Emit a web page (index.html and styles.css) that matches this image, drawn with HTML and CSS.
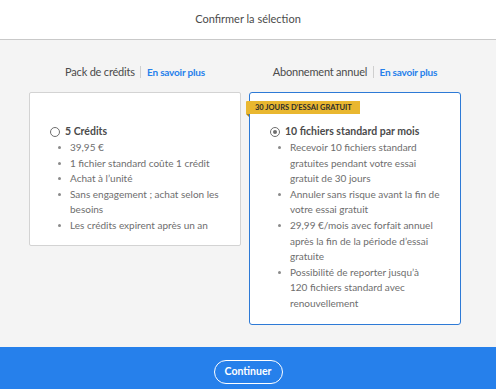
FILE: index.html
```html
<!DOCTYPE html>
<html lang="fr">
<head>
    <meta charset="UTF-8">
    <meta name="viewport" content="width=device-width, initial-scale=1.0">
    <title>Confirmer la sélection</title>
    <link rel="stylesheet" href="styles.css">
</head>
<body>
    <div class="header">Confirmer la sélection</div>
    <div class="content">
        <div class="plans">
            <div class="plan">
                <div class="plan-title">
                    Pack de crédits <span class="sep"></span> <a href="#" class="more">En savoir plus</a>
                </div>
                <div class="card">
                    <div class="option">
                        <span class="radio"></span>
                        <span class="option-name">5 Crédits</span>
                    </div>
                    <ul>
                        <li>39,95 €</li>
                        <li>1 fichier standard coûte 1 crédit</li>
                        <li>Achat à l’unité</li>
                        <li>Sans engagement ; achat selon les besoins</li>
                        <li>Les crédits expirent après un an</li>
                    </ul>
                </div>
            </div>
            <div class="plan">
                <div class="plan-title">
                    Abonnement annuel <span class="sep"></span> <a href="#" class="more">En savoir plus</a>
                </div>
                <div class="card selected">
                    <div class="badge">30 JOURS D’ESSAI GRATUIT</div>
                    <div class="option">
                        <span class="radio checked"></span>
                        <span class="option-name">10 fichiers standard par mois</span>
                    </div>
                    <ul>
                        <li>Recevoir 10 fichiers standard gratuites pendant votre essai gratuit&nbsp;de 30 jours</li>
                        <li>Annuler sans risque avant la fin de votre essai gratuit</li>
                        <li>29,99 €/mois avec forfait annuel après la fin de la période d’essai gratuite</li>
                        <li>Possibilité de reporter jusqu’à 120&nbsp;fichiers standard avec renouvellement</li>
                    </ul>
                </div>
            </div>
        </div>
    </div>
    <div class="footer">
        <a href="#" class="continue-button">Continuer</a>
    </div>
</body>
</html>
```

FILE: styles.css
```css
body {
    font-family: Lato, "Open Sans", sans-serif;
    margin: 0;
    padding: 0;
    height: 389px;
    display: flex;
    flex-direction: column;
    background-color: #f4f4f4;
    overflow: hidden;
}
.header {
    height: 39px;
    line-height: 37px;
    background-color: #ffffff;
    border-bottom: 1px solid #c9c9c9;
    text-align: center;
    color: #4b4b4b;
    font-size: 11px;
}
.content {
    flex: 1;
    padding-top: 24px;
}
.plans {
    display: flex;
    justify-content: center;
    gap: 8px;
    padding-right: 6px;
}
.plan {
    width: 212px;
}
.plan-title {
    text-align: center;
    font-size: 11px;
    letter-spacing: -0.2px;
    line-height: 16px;
    color: #4b4b4b;
    margin-bottom: 12px;
}
.sep {
    display: inline-block;
    width: 1px;
    height: 12px;
    background-color: #cfcfcf;
    vertical-align: -2px;
    margin: 0 3px;
}
.more {
    color: #2680eb;
    font-weight: bold;
    font-size: 10px;
    text-decoration: none;
}
.card {
    position: relative;
    background-color: #ffffff;
    border: 1px solid #d3d3d3;
    border-radius: 2px;
    padding: 31px 16px 11px 20px;
}
.card.selected {
    border-color: #2d7ad6;
    border-radius: 3px;
    padding-bottom: 12px;
}
.badge {
    position: absolute;
    left: -4px;
    top: 8px;
    background-color: #e9b730;
    color: #2c2c2c;
    font-size: 7.5px;
    font-weight: bold;
    line-height: 13px;
    padding: 0 8px 0 9px;
    border-radius: 1px 0 0 0;
}
.badge::after {
    content: "";
    position: absolute;
    left: 0;
    bottom: -3px;
    border-top: 3px solid #a88420;
    border-left: 3px solid transparent;
}
.option {
    display: flex;
    align-items: center;
    gap: 5px;
    color: #4b4b4b;
    font-weight: bold;
    font-size: 10.5px;
    line-height: 15px;
}
.radio {
    width: 8px;
    height: 8px;
    border: 1px solid #6e6e6e;
    border-radius: 50%;
    box-sizing: content-box;
    position: relative;
}
.radio.checked::after {
    content: "";
    position: absolute;
    left: 2px;
    top: 2px;
    width: 4px;
    height: 4px;
    border-radius: 50%;
    background-color: #6e6e6e;
}
.card ul {
    list-style: none;
    margin: 1px 0 0;
    padding: 0 0 0 20px;
    font-size: 10px;
    line-height: 15.6px;
    color: #6e6e6e;
}
.card ul li {
    position: relative;
}
.card ul li::before {
    content: "";
    position: absolute;
    left: -12px;
    top: 6px;
    width: 3px;
    height: 3px;
    border-radius: 50%;
    background-color: #8a8a8a;
}
.footer {
    height: 42px;
    background-color: #2680eb;
    display: flex;
    justify-content: center;
    align-items: flex-start;
    padding-top: 13px;
    box-sizing: border-box;
}
.continue-button {
    display: inline-block;
    height: 24px;
    width: 69px;
    box-sizing: border-box;
    border: 1.5px solid #ffffff;
    border-radius: 12px;
    color: #ffffff;
    font-weight: bold;
    font-size: 10.5px;
    line-height: 21px;
    text-align: center;
    text-decoration: none;
}
```
